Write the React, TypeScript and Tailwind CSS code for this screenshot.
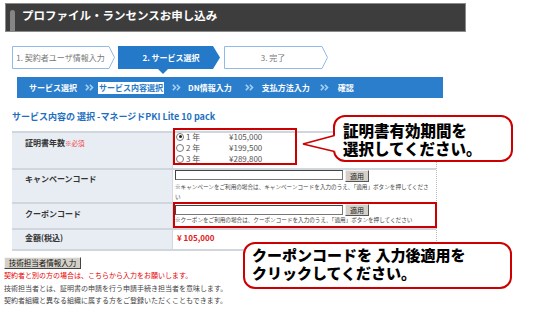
import React from "react";

function Chev() {
  return (
    <svg width="9" height="7" viewBox="0 0 9 7" className="shrink-0">
      <polyline points="0.8,0.8 3.5,3.5 0.8,6.2" fill="none" stroke="#a6d2f4" strokeWidth="1.6" />
      <polyline points="4.8,0.8 7.5,3.5 4.8,6.2" fill="none" stroke="#a6d2f4" strokeWidth="1.6" />
    </svg>
  );
}

function StepOutline({ w, text }: { w: number; text: string }) {
  return (
    <div className="relative h-[23px] shrink-0" style={{ width: w }}>
      <svg className="absolute inset-0" width={w} height={23}>
        <polygon
          points={`0.5,0.5 ${w - 6},0.5 ${w - 0.5},11.5 ${w - 6},22.5 0.5,22.5`}
          fill="#fff"
          stroke="#8fbbe6"
          strokeWidth="1"
        />
      </svg>
      <div className="relative flex h-full items-center justify-center pr-[6px] text-[8px] leading-none text-[#777]">
        {text}
      </div>
    </div>
  );
}

function StepActive({ w, text }: { w: number; text: string }) {
  return (
    <div className="relative h-[23px] shrink-0" style={{ width: w }}>
      <svg className="absolute left-0 top-0 overflow-visible" width={w} height={29}>
        <polygon points={`0,0 ${w - 7},0 ${w},11.5 ${w - 7},23 0,23`} fill="#2479c9" />
        <polygon points="39,22 51,22 45,28" fill="#2479c9" />
      </svg>
      <div className="relative flex h-full items-center justify-center pl-[4px] text-[8px] font-bold leading-none text-white">
        {text}
      </div>
    </div>
  );
}

function Radio({ checked }: { checked?: boolean }) {
  return (
    <span className="relative inline-block h-[8px] w-[8px] shrink-0 rounded-full border border-[#7a7a7a] bg-white">
      {checked && <span className="absolute left-[1.5px] top-[1.5px] h-[3px] w-[3px] rounded-full bg-[#222]" />}
    </span>
  );
}

function ApplyBtn() {
  return (
    <div className="ml-[2px] flex h-[12px] w-[24px] shrink-0 items-center justify-center border border-t-[#eee] border-l-[#eee] border-r-[#555] border-b-[#555] bg-[#d4d0c8] text-[7px] leading-none text-[#222]">
      適用
    </div>
  );
}

export default function App() {
  return (
    <div className="relative h-[313px] w-[535px] overflow-hidden bg-white font-['Noto_Sans_CJK_JP',sans-serif] text-[#333]">
      {/* header */}
      <div className="ml-[5px] mt-[3px] flex h-[29px] w-[461px] items-center border border-[#8a8a8a] bg-[#3d3d3d]">
        <div className="ml-[4px] h-[21px] w-[5px] self-end rounded-t-full bg-[#858585]" />
        <span className="ml-[7px] pb-[4px] text-[11.5px] font-bold leading-none text-white">
          プロファイル・ランセンスお申し込み
        </span>
      </div>

      {/* steps */}
      <div className="ml-[12px] mt-[14px] flex h-[23px]">
        <StepOutline w={103} text="1. 契約者ユーザ情報入力" />
        <div className="ml-[3px]">
          <StepActive w={102} text="2. サービス選択" />
        </div>
        <div className="ml-[4px]">
          <StepOutline w={104} text="3. 完了" />
        </div>
      </div>

      {/* sub nav */}
      <div className="ml-[17px] mt-[8px] flex h-[21px] w-[426px] items-center bg-[#2a7ecb] text-[8px] font-bold leading-none text-white">
        <span className="ml-[12px]">サービス選択</span>
        <span className="ml-[8px]"><Chev /></span>
        <span className="ml-[4px] flex h-[12px] items-center bg-white px-[1px] text-[#2479c9]">サービス内容選択</span>
        <span className="ml-[8px]"><Chev /></span>
        <span className="ml-[7px]">DN情報入力</span>
        <span className="ml-[13px]"><Chev /></span>
        <span className="ml-[8px]">支払方法入力</span>
        <span className="ml-[10px]"><Chev /></span>
        <span className="ml-[9px]">確認</span>
      </div>

      {/* title */}
      <div className="ml-[12px] mt-[13px] w-fit text-[9px] font-bold leading-[12px] text-[#1f6fc0]">
        サービス内容の 選択 -マネージドPKI Lite 10 pack
      </div>

      {/* table */}
      <div className="ml-[12px] mt-[8px] w-[425px] border-r border-dotted border-r-[#bbb]">
        {/* row 1 */}
        <div className="flex h-[37px] border-t-2 border-[#cfd6dd]">
          <div className="w-[161px] shrink-0 border-r border-[#d3d9df] bg-[#e8edf3] pl-[13px] pt-[5px] text-[8px] font-bold leading-[10px] text-[#333]">
            証明書年数<span className="text-[6.5px] font-normal text-[#f04040]">※必須</span>
          </div>
          <div className="-mt-[2px] pl-[3px] text-[8px] text-[#555]">
            {[
              ["1 年", "¥105,000", true],
              ["2 年", "¥199,500", false],
              ["3 年", "¥289,800", false],
            ].map(([y, p, c], i) => (
              <div key={i} className="flex h-[11.3px] items-center leading-none">
                <Radio checked={c as boolean} />
                <span className="ml-[2px] w-[43px]">{y as string}</span>
                <span>{p as string}</span>
              </div>
            ))}
          </div>
        </div>
        {/* row 2 */}
        <div className="flex h-[34px] border-t-2 border-[#cfd6dd]">
          <div className="w-[161px] shrink-0 border-r border-[#d3d9df] bg-[#e8edf3] pl-[13px] pt-[4px] text-[8px] font-bold leading-[10px] text-[#333]">
            キャンペーンコード
          </div>
          <div className="pl-[2px]">
            <div className="flex items-start">
              <div className="h-[10px] w-[168px] border border-[#777] border-t-[#444] border-l-[#444] bg-white" />
              <ApplyBtn />
            </div>
            <div className="text-[5.6px] leading-[10px] text-[#444]">
              ※キャンペーンをご利用の場合は、キャンペーンコードを入力のうえ、「適用」ボタンを押してくださ
              <br />い
            </div>
          </div>
        </div>
        {/* row 3 */}
        <div className="flex h-[26px] border-t-2 border-[#cfd6dd]">
          <div className="w-[161px] shrink-0 border-r border-[#d3d9df] bg-[#e8edf3] pl-[13px] pt-[5px] text-[8px] font-bold leading-[10px] text-[#333]">
            クーポンコード
          </div>
          <div className="pl-[2px]">
            <div className="flex items-start">
              <div className="mt-[1px] h-[10px] w-[168px] border border-[#777] border-t-[#444] border-l-[#444] bg-white" />
              <ApplyBtn />
            </div>
            <div className="text-[5.6px] leading-[8px] text-[#444]">
              ※クーポンをご利用の場合は、クーポンコードを入力のうえ、「適用」ボタンを押してください
            </div>
          </div>
        </div>
        {/* row 4 */}
        <div className="flex h-[23px] border-y-2 border-[#cfd6dd]">
          <div className="w-[161px] shrink-0 border-r border-[#d3d9df] bg-[#e8edf3] pl-[13px] pt-[3px] text-[8px] font-bold leading-[10px] text-[#333]">
            金額(税込)
          </div>
          <div className="pl-[4px] pt-[3px] text-[8px] font-bold leading-[10px] text-[#e02020]">¥ 105,000</div>
        </div>
      </div>

      {/* bottom */}
      <div className="ml-[4px] mt-[6px] flex h-[12px] w-[77px] items-center justify-center whitespace-nowrap border border-t-[#f4f4f4] border-l-[#f4f4f4] border-r-[#444] border-b-[#444] bg-[#d4d0c8] text-[7.5px] leading-none text-[#111]">
        技術担当者情報入力
      </div>
      <div className="ml-[4px] w-fit text-[7px] leading-[12.5px]">
        <div className="w-fit text-[#e60000]">契約者と別の方の場合は、こちらから入力をお願いします。</div>
        <div className="w-fit text-[#444]">技術担当者とは、証明書の申請を行う申請手続き担当者を意味します。</div>
        <div className="w-fit text-[#444]">契約者組織と異なる組織に属する方をご登録いただくこともできます。</div>
      </div>

      {/* annotation boxes */}
      <div className="absolute left-[173px] top-[128px] h-[37px] w-[124px] border-2 border-[#cc0000]" />
      <div className="absolute left-[173px] top-[202px] h-[26px] w-[264px] border-2 border-[#cc0000]" />

      {/* callout 1 */}
      <div className="absolute left-[333px] top-[115px] h-[47px] w-[180px] rounded-[12px] border-2 border-[#cc0000] bg-white pl-[8px] pt-[4px] text-[15.5px] font-black leading-[18px] text-black">
        証明書有効期間を
        <br />
        選択してください。
      </div>
      <svg className="absolute left-[301px] top-[132px]" width="36" height="24">
        <path d="M34.5,3.5 L2,12 L34.5,19.5 Z" fill="#fff" />
        <path d="M33.5,3.5 L2,12 L33.5,19.5" fill="none" stroke="#cc0000" strokeWidth="1.6" />
      </svg>

      {/* callout 2 */}
      <div className="absolute left-[243px] top-[242px] h-[47px] w-[269px] rounded-[12px] border-2 border-[#cc0000] bg-white pl-[7px] pt-[2px] text-[15px] font-black leading-[18px] text-black">
        クーポンコードを 入力後適用を
        <br />
        クリックしてください。
      </div>
    </div>
  );
}
